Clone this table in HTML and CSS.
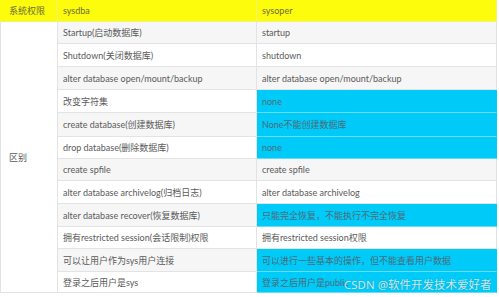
FILE: index.html
```html
<!DOCTYPE html>
<html>
<head>
<meta charset="utf-8">
<link rel="stylesheet" href="styles.css">
</head>
<body>
<div class="page">
  <div class="grid">
    <div class="c h c1">系统权限</div>
    <div class="c h">sysdba</div>
    <div class="c h">sysoper</div>

    <div class="c c1 span">区别</div>

    <div class="c g">Startup(启动数据库)</div>
    <div class="c g">startup</div>

    <div class="c">Shutdown(关闭数据库)</div>
    <div class="c">shutdown</div>

    <div class="c g">alter database open/mount/backup</div>
    <div class="c g">alter database open/mount/backup</div>

    <div class="c">改变字符集</div>
    <div class="c b">none</div>

    <div class="c g">create database(创建数据库)</div>
    <div class="c b">None不能创建数据库</div>

    <div class="c">drop database(删除数据库)</div>
    <div class="c b">none</div>

    <div class="c g">create spfile</div>
    <div class="c g">create spfile</div>

    <div class="c">alter database archivelog(归档日志)</div>
    <div class="c">alter database archivelog</div>

    <div class="c g">alter database recover(恢复数据库)</div>
    <div class="c b">只能完全恢复，不能执行不完全恢复</div>

    <div class="c">拥有restricted session(会话限制)权限</div>
    <div class="c">拥有restricted session权限</div>

    <div class="c g">可以让用户作为sys用户连接</div>
    <div class="c b">可以进行一些基本的操作，但不能查看用户数据</div>

    <div class="c">登录之后用户是sys</div>
    <div class="c b">登录之后用户是public</div>
  </div>
  <div class="mark">CSDN @软件开发技术爱好者</div>
</div>
</body>
</html>
```
FILE: styles.css
```css
html, body {
  margin: 0;
  padding: 0;
  background: #fff;
}
.page {
  position: relative;
  width: 499px;
  height: 297px;
  overflow: hidden;
}
.grid {
  display: grid;
  width: 497px;
  grid-template-columns: 58px 199px 240px;
  grid-template-rows: 22px 22px 23px 23px 23px 24px 22px 22px 23px 23px 22px 23px 21px;
  font-family: Lato, "Noto Sans CJK SC", sans-serif;
  font-size: 9px;
  color: #5a5a5a;
}
.c {
  display: flex;
  align-items: center;
  padding-left: 5px;
  box-sizing: border-box;
  border-right: 1px solid #e3e3e3;
  border-bottom: 1px solid #e3e3e3;
  white-space: nowrap;
  overflow: hidden;
  background: #fff;
}
.c1 {
  padding-left: 8px;
  border-left: 1px solid #e3e3e3;
}
.h {
  background: #fcfc0c;
  border-color: #f2f27a;
  color: #6b6b3a;
}
.h.c1 {
  border-left-color: #fcfc0c;
}
.span {
  grid-row: 2 / span 12;
}
.g {
  background: #f6f6f6;
}
.b {
  background: #00cbf8;
  border-bottom-color: #66dcf7;
  border-right-color: #00cbf8;
  color: #4d6a78;
}
.mark {
  position: absolute;
  left: 344px;
  top: 278px;
  font-family: "Noto Sans", "Noto Sans CJK SC", sans-serif;
  font-size: 11.5px;
  line-height: 14px;
  color: rgba(255, 255, 255, 0.8);
  text-shadow: 0 0 1px rgba(60, 80, 90, 0.55);
  white-space: nowrap;
}
```
